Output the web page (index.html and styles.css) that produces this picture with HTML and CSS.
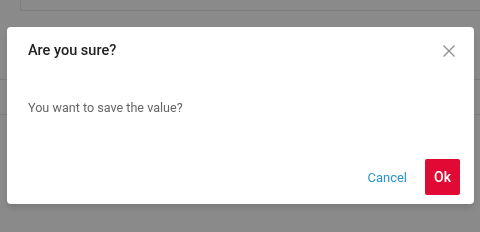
FILE: index.html
```html
<!DOCTYPE html>
<html>
<head>
<meta charset="utf-8" />
<title>Confirm</title>
<link rel="stylesheet" href="styles.css">
</head>
<body>
<div class="page">
  <div class="panel"></div>
  <div class="rows">
    <div class="row"></div>
    <div class="row"></div>
  </div>
</div>

<div class="overlay">
  <div class="dialog">
    <div class="dialog_header">
      <h2>Are you sure?</h2>
      <button class="close" aria-label="Close">
        <svg width="12" height="12" viewBox="0 0 12 12">
          <path d="M0.5 0.5 L11.5 11.5 M11.5 0.5 L0.5 11.5" stroke="#8a8a8a" stroke-width="1.2" fill="none" />
        </svg>
      </button>
    </div>
    <div class="dialog_body">You want to save the value?</div>
    <div class="dialog_footer">
      <button class="cancel">Cancel</button>
      <button class="ok">Ok</button>
    </div>
  </div>
</div>
</body>
</html>
```

FILE: styles.css
```css
* {
  font-family: Roboto, 'Liberation Sans', sans-serif;
  box-sizing: border-box;
}
body {
  margin: 0;
  background-color: #fff;
}
.page {
  height: 232px;
  background-color: #fff;
}
.panel {
  margin-left: 20px;
  height: 11px;
  border-left: 1px solid #e8e8e8;
  border-bottom: 1px solid #e8e8e8;
}
.rows {
  margin-top: 68px;
}
.row {
  height: 35px;
  border-top: 1px solid #e8e8e8;
}
.overlay {
  position: fixed;
  top: 0;
  left: 0;
  right: 0;
  bottom: 0;
  background-color: rgba(0, 0, 0, .46);
  padding: 27px 6px 0 7px;
}
.dialog {
  background-color: #fff;
  border-radius: 4px;
  height: 177px;
  box-shadow: 0 4px 6px rgba(0, 0, 0, .12);
  display: flex;
  flex-direction: column;
}
.dialog_header {
  display: flex;
  align-items: center;
  justify-content: space-between;
  padding: 14px 19px 0 21px;
}
.dialog_header h2 {
  margin: 0;
  font-size: 14.5px;
  line-height: 20px;
  font-weight: 500;
  color: #212121;
}
.close {
  border: 0;
  background: none;
  padding: 0;
  width: 12px;
  height: 12px;
  display: block;
}
.close svg {
  display: block;
}
.dialog_body {
  padding: 37px 21px 0;
  font-size: 12.6px;
  line-height: 20px;
  color: #666;
  flex: 1;
}
.dialog_footer {
  display: flex;
  justify-content: flex-end;
  align-items: center;
  gap: 18px;
  padding: 0 14px 9px;
}
.dialog_footer button {
  border: 0;
  font-size: 13px;
  cursor: pointer;
}
.cancel {
  background: none;
  color: #2a93cb;
  padding: 0;
}
.ok {
  background-color: #e00a34;
  color: #fff;
  font-weight: 500;
  font-size: 14px !important;
  width: 35px;
  height: 36px;
  border-radius: 2px;
  padding: 0;
}
```
